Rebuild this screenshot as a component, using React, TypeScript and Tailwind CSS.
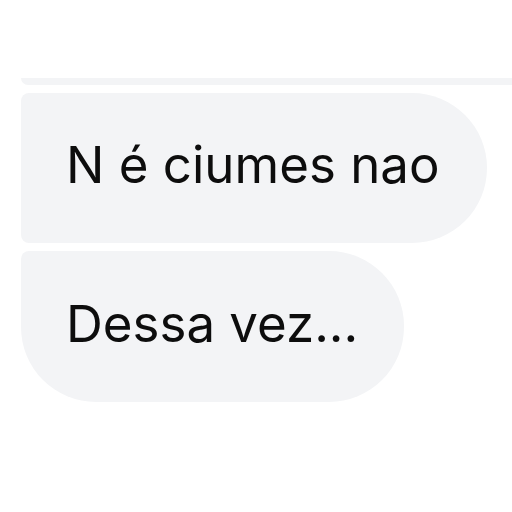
export default function App() {
  return (
    <div className="w-[512px] h-[512px] bg-white overflow-hidden" style={{ fontFamily: "Inter, 'Noto Sans', sans-serif" }}>
      <div className="pt-[78px] pl-[21px] flex flex-col">
        <div className="h-[7px] bg-[#f3f4f6] rounded-bl-[8px] w-[520px]" />
        <div className="mt-[8px] flex flex-col gap-[8px] items-start">
          <div className="h-[150px] w-[466px] bg-[#f3f4f6] rounded-l-[8px] rounded-r-[75px] flex items-center pl-[45px] pb-[6px]">
            <span className="text-[51px] leading-[60px] text-[#0d0d0d] tracking-[0px]">N é ciumes nao</span>
          </div>
          <div className="h-[151px] w-[383px] bg-[#f3f4f6] rounded-tl-[8px] rounded-tr-[75px] rounded-br-[75px] rounded-bl-[75px] flex items-center pl-[45px] pb-[6px]">
            <span className="text-[51px] leading-[60px] text-[#0d0d0d]">Dessa vez...</span>
          </div>
        </div>
      </div>
    </div>
  );
}
